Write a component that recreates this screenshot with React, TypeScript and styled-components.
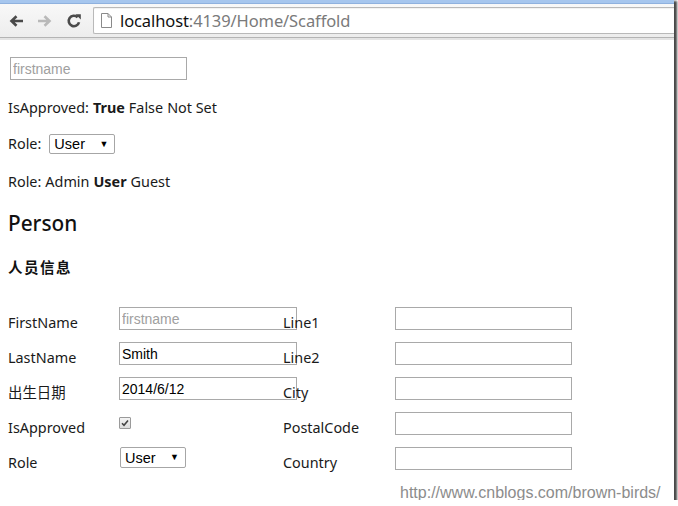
import React from "react";
import styled, { createGlobalStyle } from "styled-components";

const Global = createGlobalStyle`
  html, body { margin: 0; padding: 0; background: #fff; }
  body { font-family: "Noto Sans", "Noto Sans CJK SC", sans-serif; }
`;

const Window = styled.div`
  position: relative;
  width: 674px;
  height: 500px;
  display: flex;
  flex-direction: column;
  background: #fff;
  overflow: hidden;
  box-shadow: 2px 2px 2px 1px rgba(40, 40, 40, 0.85);
`;

const TabStrip = styled.div`
  height: 3px;
  background: #a6c6ee;
  border-bottom: 1px solid #8fb1de;
`;

const Toolbar = styled.div`
  height: 33px;
  display: flex;
  align-items: center;
  padding-left: 8px;
  background: linear-gradient(#f8f8f8, #ededed);
  border-bottom: 1px solid #b4b4b4;
`;

const NavGroup = styled.div`
  display: flex;
  align-items: center;
  gap: 13px;
`;

const NavIcon = styled.svg`
  width: 16px;
  height: 16px;
  display: block;
`;

const Address = styled.div`
  margin-left: 11px;
  flex: 1;
  height: 25px;
  display: flex;
  align-items: center;
  gap: 8px;
  padding-left: 7px;
  background: #fff;
  border: 1px solid #b9b9b9;
  border-right: none;
  border-radius: 2px 0 0 2px;
  box-shadow: inset 0 1px 1px rgba(0, 0, 0, 0.06);
`;

const Url = styled.span`
  font-family: "Noto Sans", sans-serif;
  font-size: 16.5px;
  color: #111;
  letter-spacing: -0.1px;
`;

const UrlRest = styled.span`
  color: #7a7a7a;
`;

const ToolbarShade = styled.div`
  height: 2px;
  background: #e4e4e4;
`;

const Page = styled.div`
  flex: 1;
  padding: 0 8px;
  color: #1a1a1a;
  font-size: 14.4px;
`;

const Block = styled.div<{ $mt: number }>`
  margin-top: ${(p) => p.$mt}px;
  line-height: 20px;
  height: 20px;
  display: flex;
  align-items: center;
`;

const TextBox = styled.input<{ $w?: number }>`
  box-sizing: border-box;
  width: ${(p) => p.$w ?? 178}px;
  height: 23px;
  margin: 0;
  padding: 0 2px;
  border: 1px solid #a9a9a9;
  border-radius: 0;
  font-family: "Liberation Sans", Arial, sans-serif;
  font-size: 14px;
  color: #000;
  background: #fff;
  outline: none;
  &::placeholder {
    color: #a0a0a0;
  }
`;

const TopInputRow = styled.div`
  margin-top: 17px;
  padding-left: 2px;
  height: 23px;
`;

const Bold = styled.b`
  font-weight: 700;
`;

const Gap = styled.span`
  display: inline-block;
  width: 4px;
`;

const SelectBox = styled.span<{ $h: number }>`
  box-sizing: border-box;
  display: inline-flex;
  align-items: center;
  justify-content: space-between;
  width: 66px;
  height: ${(p) => p.$h}px;
  padding: 0 6px 0 4px;
  border: 1px solid #a6a6a6;
  border-radius: 2px;
  background: #fff;
  font-family: "Liberation Sans", Arial, sans-serif;
  font-size: 14.5px;
  color: #000;
`;

const Arrow = styled.span`
  font-size: 9px;
  line-height: 1;
`;

const Heading = styled.h2`
  margin: 17px 0 0;
  font-size: 20.8px;
  font-weight: 500;
  line-height: 28px;
  color: #111;
`;

const SubHeading = styled.h4`
  margin: 20px 0 0;
  font-size: 14.5px;
  font-weight: 700;
  line-height: 20px;
  letter-spacing: 1.5px;
  color: #111;
`;

const FormGrid = styled.div`
  margin-top: 28px;
  display: grid;
  grid-template-columns: 111px 164px 112px 180px;
  grid-auto-rows: 35px;
`;

const Label = styled.div`
  padding-top: 8px;
  line-height: 20px;
  white-space: nowrap;
  position: relative;
  z-index: 1;
`;

const Field = styled.div<{ $mt?: number }>`
  padding-top: ${(p) => p.$mt ?? 2}px;
`;

const CheckBox = styled.span`
  box-sizing: border-box;
  display: flex;
  align-items: center;
  justify-content: center;
  width: 12px;
  height: 12px;
  border: 1px solid #9a9a9a;
  border-radius: 1px;
  background: linear-gradient(#f4f4f4, #dcdcdc);
`;

const Watermark = styled.div`
  position: absolute;
  left: 400px;
  top: 484px;
  font-family: "Liberation Sans", Arial, sans-serif;
  font-size: 16px;
  color: #8c8c8c;
  white-space: nowrap;
`;

const BackIcon = () => (
  <NavIcon viewBox="0 0 16 16">
    <path d="M15 8H4M8.5 3.2L3.5 8l5 4.8" fill="none" stroke="#4a4a4a" strokeWidth="2.6" />
  </NavIcon>
);

const ForwardIcon = () => (
  <NavIcon viewBox="0 0 16 16">
    <path d="M1 8h11M7.5 3.2l5 4.8-5 4.8" fill="none" stroke="#b9b9b9" strokeWidth="2.6" />
  </NavIcon>
);

const ReloadIcon = () => (
  <NavIcon viewBox="0 0 16 16">
    <path d="M13 9.2A5.2 5.2 0 1 1 11.6 4.3" fill="none" stroke="#4a4a4a" strokeWidth="2.6" />
    <path d="M9.4 1.2h5.4v5.4z" fill="#4a4a4a" />
  </NavIcon>
);

const PageIcon = () => (
  <svg width="11" height="15" viewBox="0 0 11 15" style={{ display: "block" }}>
    <path d="M0.5 0.5h6.5l3.5 3.5v10.5h-10z M7 0.5v3.5h3.5" fill="#fff" stroke="#8a8a8a" strokeWidth="1" />
  </svg>
);

const CheckMark = () => (
  <svg width="8" height="8" viewBox="0 0 8 8">
    <path d="M1 4.2l2 2L7 1.4" fill="none" stroke="#444" strokeWidth="1.6" />
  </svg>
);

const Select = ({ h }: { h: number }) => (
  <SelectBox $h={h}>
    User<Arrow>▼</Arrow>
  </SelectBox>
);

const SelectCell = styled.span`
  display: block;
  padding-left: 1px;
`;

const rows = [
  { l: "FirstName", field: <TextBox placeholder="firstname" />, r: "Line1" },
  { l: "LastName", field: <TextBox defaultValue="Smith" />, r: "Line2" },
  { l: "出生日期", field: <TextBox defaultValue="2014/6/12" />, r: "City" },
  {
    l: "IsApproved",
    field: (
      <CheckBox>
        <CheckMark />
      </CheckBox>
    ),
    mt: 7,
    r: "PostalCode",
  },
  {
    l: "Role",
    field: (
      <SelectCell>
        <Select h={21} />
      </SelectCell>
    ),
    r: "Country",
  },
];

export default function App() {
  return (
    <>
      <Global />
      <Window>
        <TabStrip />
        <Toolbar>
          <NavGroup>
            <BackIcon />
            <ForwardIcon />
            <ReloadIcon />
          </NavGroup>
          <Address>
            <PageIcon />
            <Url>
              localhost<UrlRest>:4139/Home/Scaffold</UrlRest>
            </Url>
          </Address>
        </Toolbar>
        <ToolbarShade />
        <Page>
          <TopInputRow>
            <TextBox $w={177} placeholder="firstname" />
          </TopInputRow>
          <Block $mt={18}>
            IsApproved:<Gap />
            <Bold>True</Bold>
            <Gap />False<Gap />Not Set
          </Block>
          <Block $mt={16}>
            Role:<Gap />
            <Gap />
            <Select h={20} />
          </Block>
          <Block $mt={18}>
            Role:<Gap />Admin<Gap />
            <Bold>User</Bold>
            <Gap />Guest
          </Block>
          <Heading>Person</Heading>
          <SubHeading>人员信息</SubHeading>
          <FormGrid>
            {rows.map((r) => (
              <React.Fragment key={r.l}>
                <Label>{r.l}</Label>
                <Field $mt={r.mt}>{r.field}</Field>
                <Label>{r.r}</Label>
                <Field>
                  <TextBox $w={177} />
                </Field>
              </React.Fragment>
            ))}
          </FormGrid>
        </Page>
        <Watermark>http://www.cnblogs.com/brown-birds/</Watermark>
      </Window>
    </>
  );
}
